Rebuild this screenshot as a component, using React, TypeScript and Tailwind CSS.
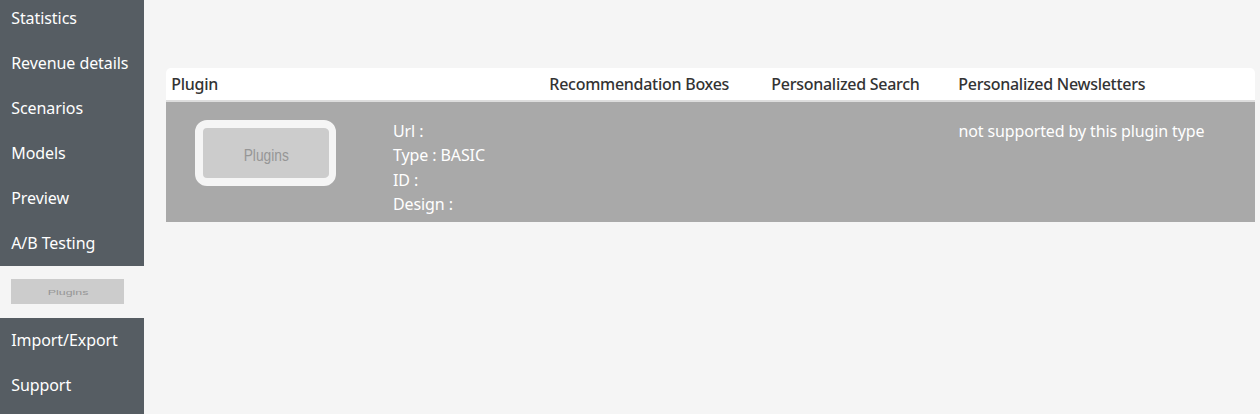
const itemsTop = ["Statistics", "Revenue details", "Scenarios", "Models", "Preview", "A/B Testing"];
const itemsBottom = ["Import/Export", "Support"];

function NavItem({ label }: { label: string }) {
  return <a className="block h-[45px] shrink-0 whitespace-nowrap pl-[11.2px] leading-[45px] tracking-[-0.07px]">{label}</a>;
}

export default function App() {
  return (
    <div className="flex h-[414px] w-[1260px] overflow-hidden bg-[#f5f5f5] font-['Noto_Sans',sans-serif] text-[16px] text-white">
      <nav className="flex w-[144px] shrink-0 flex-col">
        <div className="flex h-[266px] flex-col justify-end overflow-hidden bg-[#565d63]">
          {itemsTop.map((label) => <NavItem key={label} label={label} />)}
        </div>
        <div className="h-[52px] pl-[11px] pt-[13px]">
          <div className="flex h-[25px] w-[113px] items-center justify-center bg-[#ccc] pl-px pt-[2px]">
            <span className="scale-x-[1.55] font-['Liberation_Sans',sans-serif] text-[8px] text-[#969696]">Plugins</span>
          </div>
        </div>
        <div className="flex-1 bg-[#565d63]">
          {itemsBottom.map((label) => <NavItem key={label} label={label} />)}
        </div>
      </nav>
      <main className="ml-[22px] mt-[68px] w-[1089px]">
        <div className="grid h-[34px] grid-cols-[378px_222px_187px_1fr] rounded-t-[5px] border-b-2 border-[#ddd] bg-white pl-[5.3px] leading-[32px] font-medium tracking-[-0.27px] text-[#333]">
          <span>Plugin</span>
          <span>Recommendation Boxes</span>
          <span>Personalized Search</span>
          <span>Personalized Newsletters</span>
        </div>
        <div className="flex h-[120px] bg-[#a9a9a9] pl-[29px] pt-[18px]">
          <div className="flex h-[66px] w-[141px] items-center justify-center rounded-[12px] border-8 border-r-[7px] border-[#f5f5f5] bg-[#ccc] pt-[5px]">
            <span className="scale-x-[0.86] font-['Liberation_Sans',sans-serif] text-[16px] text-[#969696]">Plugins</span>
          </div>
          <div className="-mt-px ml-[57px] w-[565.4px] leading-[24.4px] tracking-[-0.1px]">
            <div>Url :</div>
            <div>Type : BASIC</div>
            <div>ID :</div>
            <div>Design :</div>
          </div>
          <div className="-mt-px leading-[24.4px] tracking-[-0.12px]">not supported by this plugin type</div>
        </div>
      </main>
    </div>
  );
}
